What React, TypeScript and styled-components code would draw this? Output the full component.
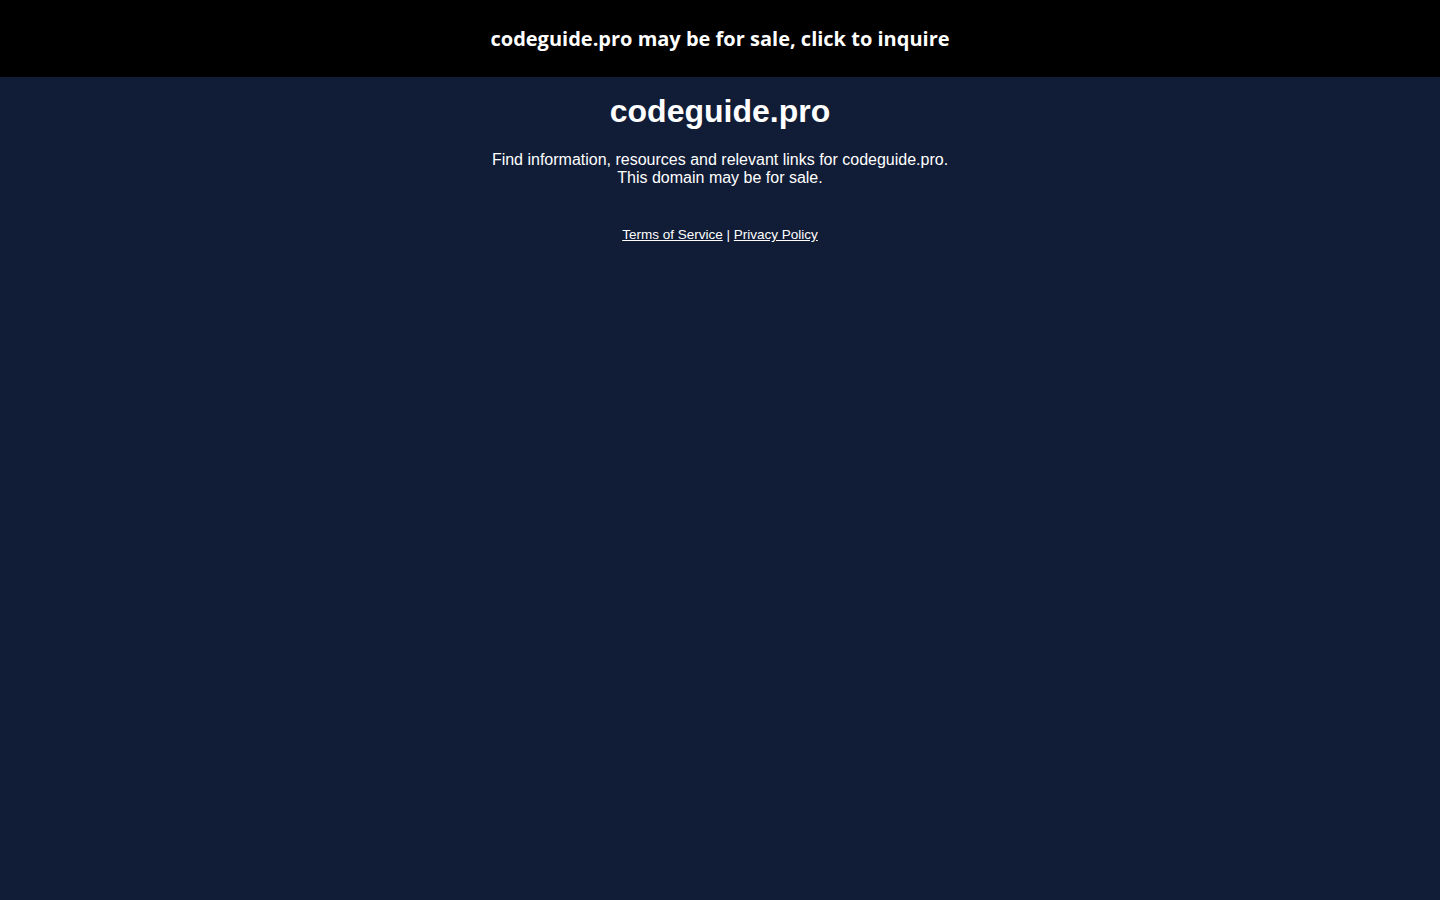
import React from "react";
import styled, { createGlobalStyle } from "styled-components";

const Global = createGlobalStyle`
  html, body { margin: 0; padding: 0; background: #111c36; }
  body { font-family: "Liberation Sans", Arial, sans-serif; color: #ffffff; }
`;

const Banner = styled.a`
  display: flex;
  align-items: center;
  justify-content: center;
  height: 77px;
  background: #000000;
  color: #ffffff;
  text-decoration: none;
  font-family: "Open Sans", "Noto Sans", sans-serif;
  font-weight: 700;
  font-size: 20px;
`;

const Main = styled.main`
  display: flex;
  flex-direction: column;
  align-items: center;
  text-align: center;
  padding-top: 16px;
`;

const Title = styled.h1`
  margin: 0;
  font-size: 32px;
  font-weight: 700;
  line-height: 37px;
`;

const Lead = styled.p`
  margin: 21px 0 0;
  font-size: 16px;
  line-height: 18px;
`;

const Footer = styled.div`
  margin-top: 40px;
  font-size: 13.5px;
  line-height: 15px;
`;

const Link = styled.a`
  color: #ffffff;
  text-decoration: underline;
`;

export default function App() {
  return (
    <>
      <Global />
      <Banner href="#">codeguide.pro may be for sale, click to inquire</Banner>
      <Main>
        <Title>codeguide.pro</Title>
        <Lead>
          Find information, resources and relevant links for codeguide.pro.
          <br />
          This domain may be for sale.
        </Lead>
        <Footer>
          <Link href="#">Terms of Service</Link> | <Link href="#">Privacy Policy</Link>
        </Footer>
      </Main>
    </>
  );
}
